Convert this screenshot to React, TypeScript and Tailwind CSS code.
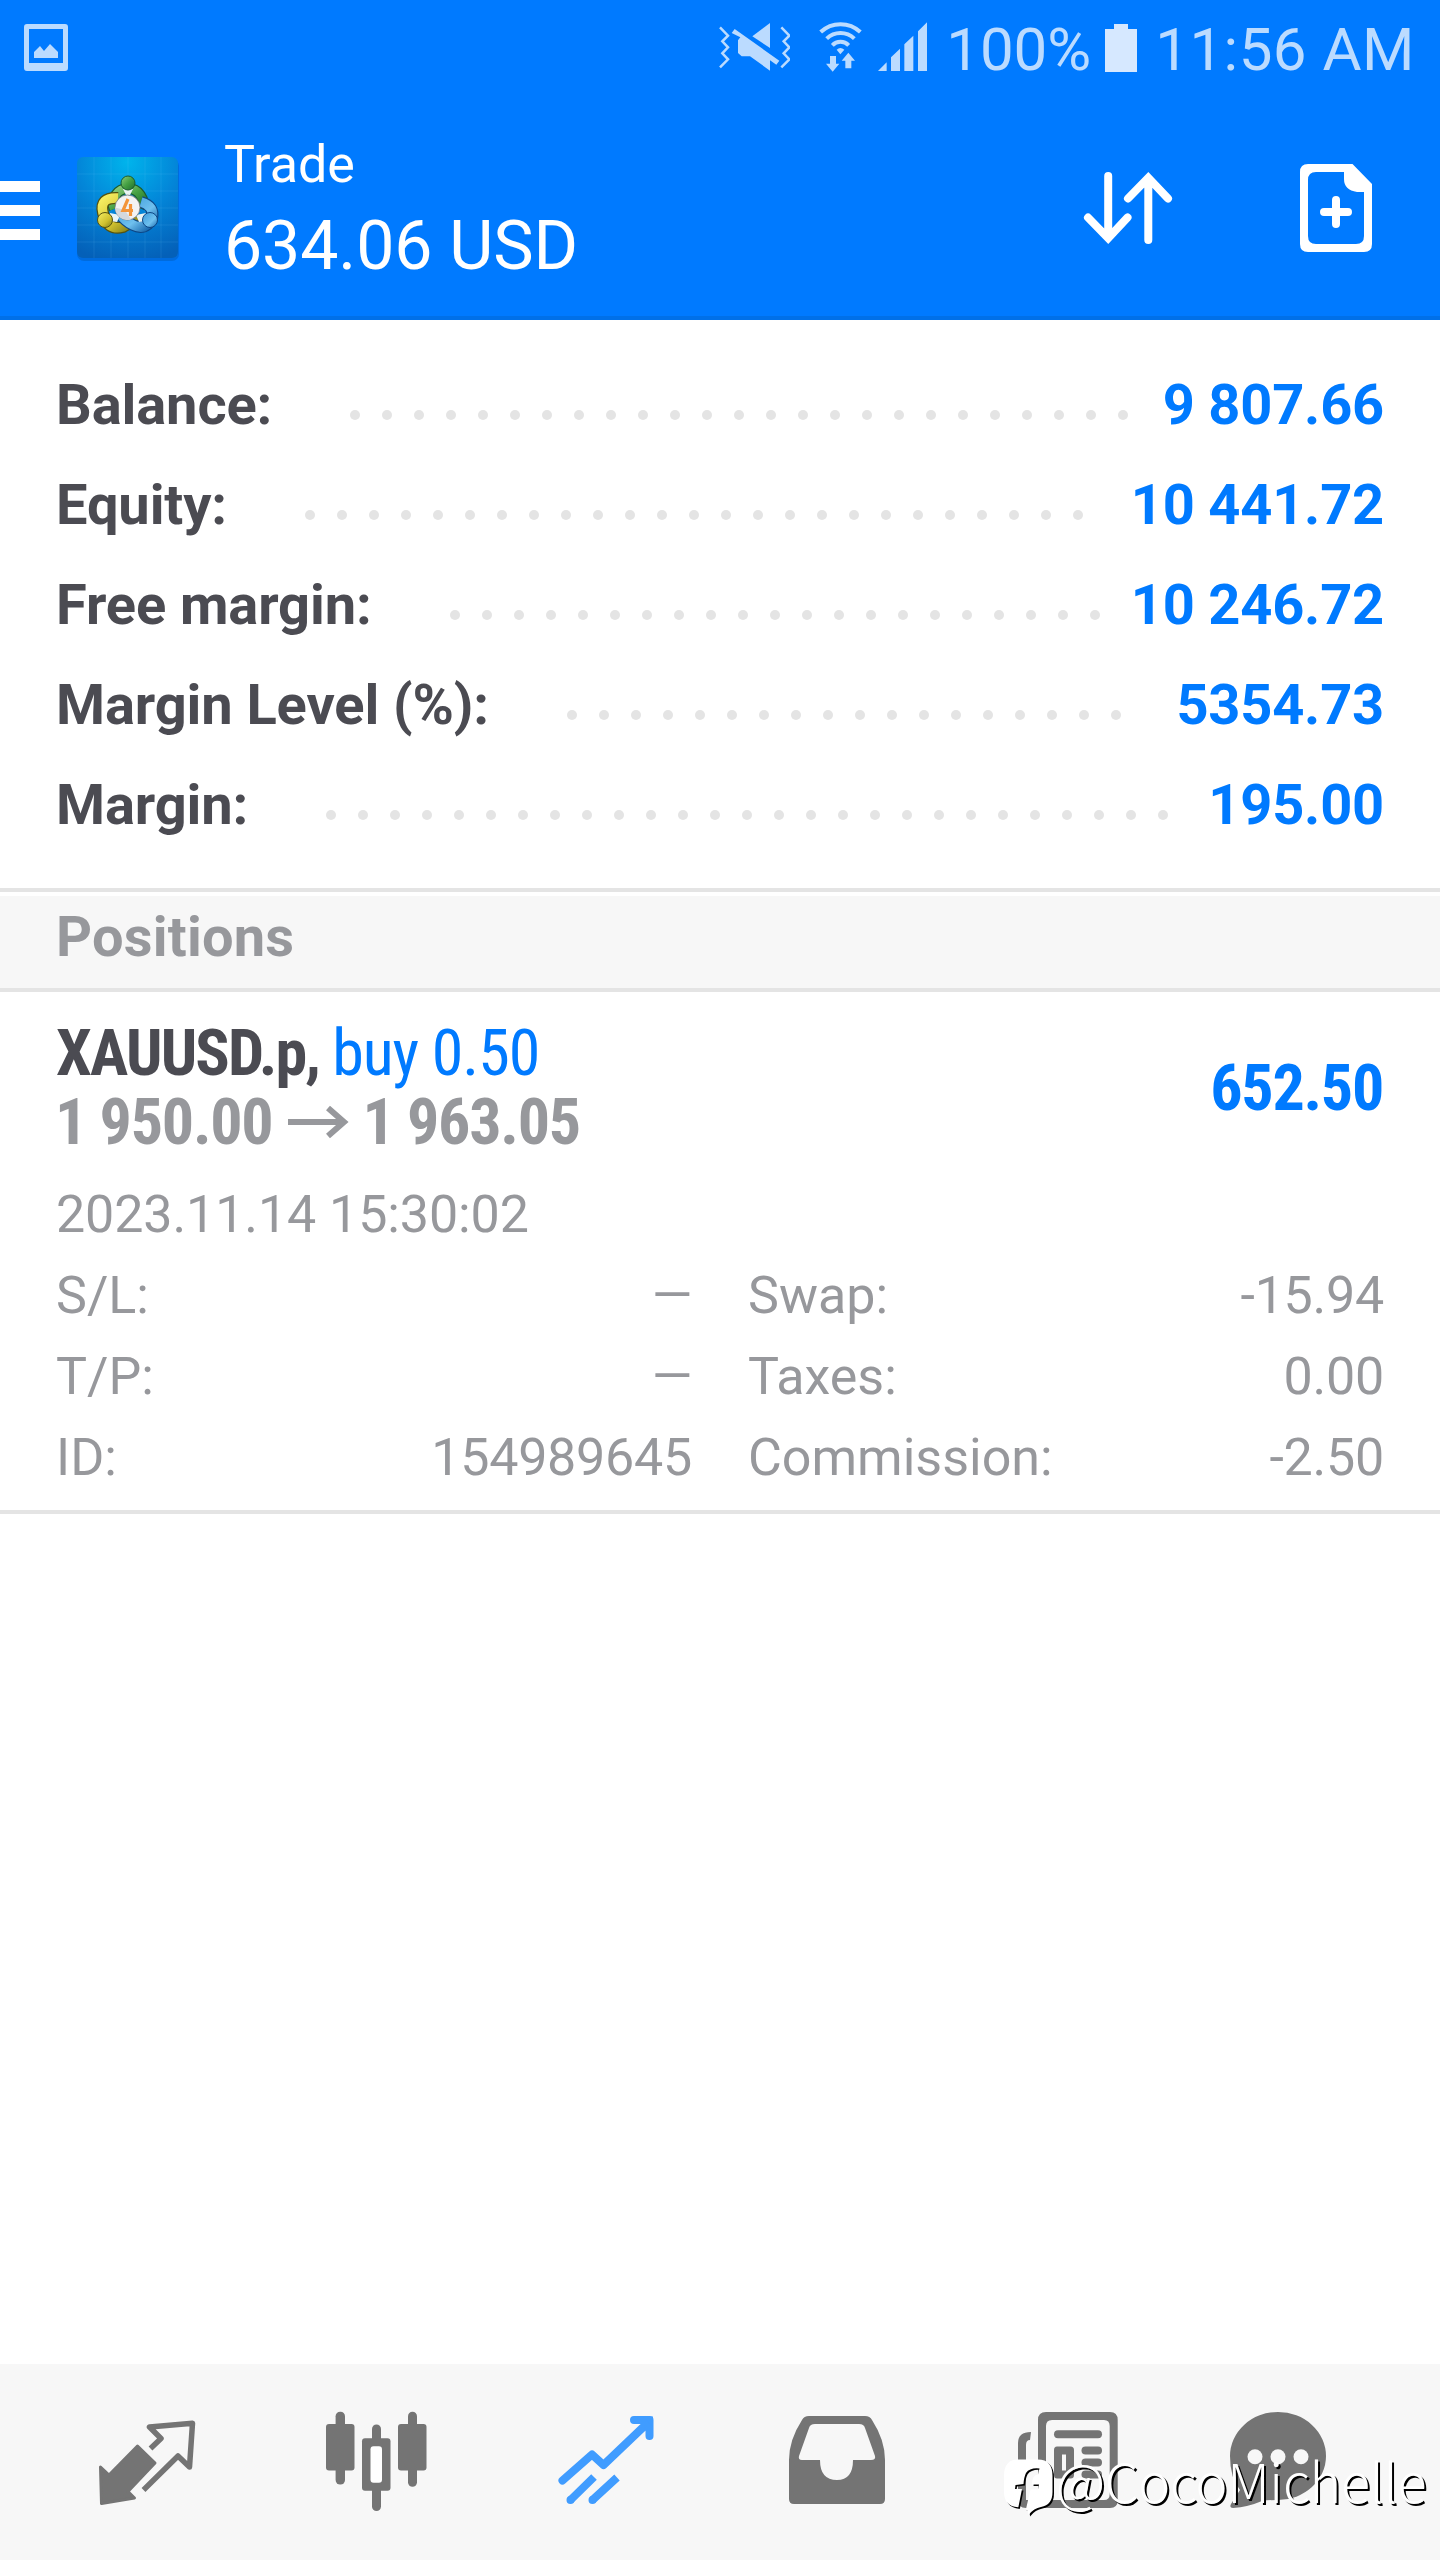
import type { ReactNode } from "react";

const summary = [
  { label: "Balance:", value: "9 807.66", dots: 25 },
  { label: "Equity:", value: "10 441.72", dots: 25 },
  { label: "Free margin:", value: "10 246.72", dots: 21 },
  { label: "Margin Level (%):", value: "5354.73", dots: 18 },
  { label: "Margin:", value: "195.00", dots: 27 },
];

const details = [
  ["S/L:", "—"],
  ["Swap:", "-15.94"],
  ["T/P:", "—"],
  ["Taxes:", "0.00"],
  ["ID:", "154989645"],
  ["Commission:", "-2.50"],
];

function StatusBar() {
  return (
    <div className="flex h-[100px] items-center text-[60px] leading-[100px] text-[#bbdbff]">
      <svg className="-mt-[5px] ml-6 h-12 w-11" viewBox="0 0 44 48">
        <path fillRule="evenodd" fill="#bbdbff" d="M3 0H41Q44 0 44 3V44Q44 47 41 47H3Q0 47 0 44V3Q0 0 3 0ZM5 5V39H39V5Z" />
        <path fill="#bbdbff" d="M10 34V28L16 22L20 27L26 20L34 28V34Z" />
      </svg>
      <svg className="-mt-[5px] ml-auto h-[65px] w-20" viewBox="0 0 240 195">
        <g fill="none" stroke="#bbdbff" strokeWidth="7.500">
          <path d="M30 37L54 62L37 79L54 97L37 115L54 133L30 157" />
          <path d="M214 37L238 62L221 79L238 97L221 115L238 133L214 157" />
        </g>
        <path fill="#bbdbff" d="M180 24V99L127 64Z" />
        <path fill="#bbdbff" d="M74 42L208 137L199 149L180 136V167L120 124H95L84 114V76L91 67L65 54Z" />
      </svg>
      <svg className="-mt-[5px] h-[65px] w-20" viewBox="240 0 240 195">
        <g fill="none" stroke="#bbdbff" strokeWidth="12">
          <path d="M332 51A87 87 0 0 1 451 51" />
          <path d="M350 71A60 60 0 0 1 433 71" />
          <path d="M367 91A34 34 0 0 1 416 91" />
        </g>
        <path fill="#bbdbff" d="M380 104Q391 94 403 104L391 118ZM360 123H378V146H388L368 170L348 146H360ZM415 113L435 137H424V160H406V137H395Z" />
      </svg>
      <svg className="-mt-[5px] h-[65px] w-20" viewBox="480 0 240 195">
        <path fill="#bbdbff" d="M504 168L530 142V168ZM543 168V127L570 101V168ZM583 168V88L610 62V168ZM624 168V49L651 22V168Z" />
      </svg>
      <span className="-ml-[4px] w-[150px] whitespace-nowrap">100%</span>
      <svg className="-mt-[5px] ml-[9px] h-12 w-8" viewBox="0 0 32 48">
        <path fill="#d6e8ff" d="M9 0H23V5H32V48H0V5H9Z" />
      </svg>
      <span className="ml-[18px] mr-[25px] whitespace-nowrap tracking-[0.5px]">11:56 AM</span>
    </div>
  );
}

function AppLogo() {
  return (
    <svg className="h-[110px] w-[110px]" viewBox="0 0 110 110">
      <defs>
        <radialGradient id="tile" cx="0.5" cy="0.05" r="1">
          <stop offset="0" stopColor="#00b4ec" />
          <stop offset="0.5" stopColor="#0385d8" />
          <stop offset="1" stopColor="#0460b8" />
        </radialGradient>
        <linearGradient id="green" x1="0" y1="0" x2="1" y2="1">
          <stop offset="0" stopColor="#8fce7d" />
          <stop offset="0.5" stopColor="#45a043" />
          <stop offset="1" stopColor="#1d6b2c" />
        </linearGradient>
        <linearGradient id="gold" x1="0" y1="0" x2="1" y2="1">
          <stop offset="0" stopColor="#f6ee62" />
          <stop offset="0.6" stopColor="#cfc02e" />
          <stop offset="1" stopColor="#7d7a16" />
        </linearGradient>
        <linearGradient id="azure" x1="0" y1="0" x2="1" y2="1">
          <stop offset="0" stopColor="#3a9bdc" />
          <stop offset="0.6" stopColor="#6fc0ee" />
          <stop offset="1" stopColor="#1767ad" />
        </linearGradient>
      </defs>
      <rect x="4" y="6" width="102" height="102" rx="7" fill="#004f9e" opacity="0.35" />
      <rect x="4" y="4" width="101" height="101" rx="6" fill="url(#tile)" />
      <path d="M21 4V105M38 4V105M55 4V105M72 4V105M88 4V105M4 21H105M4 38H105M4 55H105M4 72H105M4 89H105" stroke="#7fd4ff" strokeOpacity="0.13" />
      <path d="M41 56A15 15 0 1 1 69 56" fill="none" stroke="#1c5c2c" strokeWidth="11" />
      <path d="M41 56A15 15 0 1 1 69 56" fill="none" stroke="url(#green)" strokeWidth="8.500" />
      <path d="M45 45Q26 44 30 60Q34 78 50 74Q58 70 62 63" fill="none" stroke="#55520f" strokeWidth="12" />
      <path d="M45 45Q26 44 30 60Q34 78 50 74Q58 70 62 63" fill="none" stroke="url(#gold)" strokeWidth="9.500" />
      <path d="M68 49Q82 53 79 66Q72 78 60 72Q52 68 48 62" fill="none" stroke="#0d4685" strokeWidth="12" />
      <path d="M68 49Q82 53 79 66Q72 78 60 72Q52 68 48 62" fill="none" stroke="url(#azure)" strokeWidth="9.500" />
      <path d="M50 36H60L57 42H53ZM37 60L47 62L44 69L36 68ZM73 60L63 62L66 69L74 68Z" fill="#eaf4f4" />
      <circle cx="55" cy="30" r="7" fill="url(#green)" stroke="#1c5c2c" strokeWidth="1" />
      <circle cx="32" cy="67" r="7.500" fill="url(#gold)" stroke="#55520f" strokeWidth="1" />
      <circle cx="77" cy="67" r="7.500" fill="url(#azure)" stroke="#0d4685" strokeWidth="1" />
      <circle cx="54.500" cy="54.500" r="12.500" fill="#f3f3f3" stroke="#777" strokeWidth="0.8" />
      <path d="M42 54.500A12.500 12.500 0 0 0 58 66.500L52 57Z" fill="#d4d8dc" />
      <path d="M55 46L50 57.500H60M57.500 51V63" fill="none" stroke="#f3953a" strokeWidth="3.200" />
    </svg>
  );
}

function Header() {
  return (
    <header className="h-80 border-b-4 border-[#0070e8] bg-[#007aff] text-white">
      <StatusBar />
      <div className="flex pt-7">
        <div className="mt-[53px] flex w-10 flex-col gap-[13px]">
          <div className="h-[11px] bg-white" />
          <div className="h-[11px] bg-white" />
          <div className="h-[11px] bg-white" />
        </div>
        <div className="ml-[33px] mt-[25px]">
          <AppLogo />
        </div>
        <div className="ml-[41px] mt-px whitespace-nowrap">
          <div className="text-[52px] leading-[72px]">Trade</div>
          <div className="text-[68px] leading-[91px] tracking-[-0.1px]">634.06 USD</div>
        </div>
        <svg className="ml-auto mt-[36px] h-[88px] w-[92px]" viewBox="1082 164 92 88">
          <path d="M1108.200 176V237M1088 217.500L1108.200 238.300L1127.500 217.500M1148.300 240V179M1128 198.500L1148.300 177.700L1168 198.500" fill="none" stroke="white" strokeWidth="8" strokeLinecap="round" />
        </svg>
        <svg className="ml-[126px] mr-[68px] mt-[36px] h-[88px] w-[72px]" viewBox="1300 164 72 88">
          <path fillRule="evenodd" fill="white" d="M1308 164H1352.500L1372 184V244Q1372 252 1364 252H1308Q1300 252 1300 244V172Q1300 164 1308 164ZM1316 172Q1308 172 1308 180V236Q1308 244 1316 244H1356Q1364 244 1364 236V192H1357Q1344 190 1344 179V172Z" />
          <path d="M1324 212H1348M1336 200V224" stroke="white" strokeWidth="8" strokeLinecap="round" />
        </svg>
      </div>
    </header>
  );
}

function NavIcon({ x, children }: { x: number; children: ReactNode }) {
  return (
    <svg className="h-[196px] w-[230px]" viewBox={`${x} 2364 230 196`} fill="#747474">
      {children}
    </svg>
  );
}

function BottomNav() {
  return (
    <nav className="flex h-[196px] bg-[#f7f7f7] pl-8">
      <NavIcon x={32}>
        <path stroke="#747474" strokeWidth="3" strokeLinejoin="round" d="M137.500 2446L155 2463L128 2491.500L134.500 2498L101.500 2503.500L100.500 2467L109 2475Z" />
        <path fill="none" stroke="#747474" strokeWidth="5.500" strokeLinejoin="round" d="M150.500 2448.500L161 2438.500L149.500 2427L192.500 2423.300L189.500 2467L178 2456L143.500 2490" />
      </NavIcon>
      <NavIcon x={262}>
        <rect x="335.600" y="2411.700" width="9.400" height="72.800" rx="4.500" />
        <rect x="326" y="2424" width="28.500" height="46.500" rx="3" />
        <rect x="408" y="2411.700" width="9" height="75" rx="4.500" />
        <rect x="398" y="2424" width="28.500" height="46.500" rx="3" />
        <rect x="372" y="2424.500" width="9" height="86.500" rx="4.500" />
        <rect x="362" y="2438.300" width="28.500" height="52.500" rx="3" />
        <rect x="370.500" y="2446.300" width="11.500" height="36.500" rx="3" fill="#fff" />
      </NavIcon>
      <NavIcon x={492}>
        <g fill="none" stroke="#409cff" strokeWidth="8">
          <path strokeLinecap="round" strokeLinejoin="round" d="M562.500 2480.500L592 2454.500L603.500 2465L646 2424.500M634 2420H649.500V2436" />
          <path d="M643 2416.500H653V2427Z" fill="#409cff" stroke="none" />
          <path d="M570.500 2500L594 2477M592.500 2500L617 2477.500" />
          <path strokeLinecap="round" d="M570.500 2500h0M592.500 2500h0" />
        </g>
      </NavIcon>
      <NavIcon x={722}>
        <path fillRule="evenodd" d="M809 2416H865Q870 2416 872 2420Q885 2440 885 2460V2499Q885 2504 880 2504H794Q789 2504 789 2499V2460Q789 2440 802 2420Q804 2416 809 2416ZM815 2424Q810 2424 809 2428L799 2456Q798 2460 802 2460H820Q820 2480 837 2480Q853 2480 853 2460H871Q876 2460 875 2456L865 2428Q864 2424 859 2424Z" />
      </NavIcon>
      <NavIcon x={952}>
        <path fillRule="evenodd" d="M1046 2412H1110Q1117.700 2412 1117.700 2420V2500Q1117.700 2508 1110 2508H1026Q1018 2508 1018 2500V2443Q1018 2432 1031 2432L1030 2440Q1026 2440 1026 2445V2500H1038V2420Q1038 2412 1046 2412ZM1052 2420Q1046 2420 1046 2426V2500H1104Q1109.700 2500 1109.700 2494V2426Q1109.700 2420 1104 2420Z" />
        <rect x="1054" y="2430.300" width="48" height="8" rx="4" />
        <path fillRule="evenodd" d="M1057 2446.500H1070.500Q1074 2446.500 1074 2450V2475Q1074 2478.500 1070.500 2478.500H1057Q1054 2478.500 1054 2475V2450Q1054 2446.500 1057 2446.500ZM1062 2454.500V2470.500H1066V2454.500Z" />
        <rect x="1081.500" y="2446.500" width="20.500" height="8" rx="4" />
        <rect x="1081.500" y="2458.500" width="20.500" height="8" rx="4" />
        <rect x="1081.500" y="2470.500" width="20.500" height="8" rx="4" />
      </NavIcon>
      <NavIcon x={1182}>
        <path d="M1230 2456A48 44 0 1 1 1278 2500Q1268 2500 1262 2501Q1248 2507 1233 2508Q1229 2508 1231 2504L1240 2490Q1230 2478 1230 2456Z" />
        <circle cx="1255" cy="2456.700" r="7.500" fill="#f7f7f7" />
        <circle cx="1278" cy="2456.700" r="7.500" fill="#f7f7f7" />
        <circle cx="1301" cy="2456.700" r="7.500" fill="#f7f7f7" />
      </NavIcon>
    </nav>
  );
}

function Watermark() {
  return (
    <div className="absolute bottom-[40px] left-[1000px] flex h-[64px] items-start">
      <svg className="h-[64px] w-[57px]" viewBox="1000 2456 57 64">
        <defs>
          <mask id="cut" maskUnits="userSpaceOnUse" x="1000" y="2456" width="60" height="66">
            <path
              d="M1018 2459.500H1038Q1052.500 2459.500 1052.500 2476V2492Q1052.500 2505 1041 2507Q1034 2508 1028.500 2515Q1029 2508 1020 2507.500Q1004 2507 1004 2492V2476Q1004 2459.500 1018 2459.500Z"
              fill="white"
            />
            <path
              d="M1039.500 2468.500Q1030 2467.500 1026 2473Q1024 2477 1023.500 2484L1015.500 2485L1015 2489H1022L1018 2509H1026L1030.500 2489.500H1038L1039 2484.500H1032Q1032 2475 1038 2474.500Z"
              fill="black"
            />
          </mask>
        </defs>
        <g transform="translate(1.500 1.500)">
          <rect x="1000" y="2456" width="60" height="66" fill="black" mask="url(#cut)" />
        </g>
        <rect x="1000" y="2456" width="60" height="66" fill="white" mask="url(#cut)" />
      </svg>
      <span className="-ml-px -mt-[8px] whitespace-nowrap font-['Noto_Sans_CJK_SC',sans-serif] text-[54px] font-light leading-[64px] tracking-[-0.35px] text-white [text-shadow:2px_2px_0_#000]">
        @CocoMichelle
      </span>
    </div>
  );
}

export default function App() {
  return (
    <div className="relative flex h-[2560px] w-[1440px] flex-col overflow-hidden bg-white font-['Roboto',sans-serif]">
      <Header />

      <section className="h-[572px] border-b-4 border-[#e4e4e4] px-14 pt-[35px] text-[56px] font-bold leading-[100px] tracking-[-0.2px] whitespace-nowrap">
        {summary.map((row) => (
          <div key={row.label} className="flex h-[100px] items-center">
            <span className="tracking-[-0.1px] text-[#4b4b52]">{row.label}</span>
            <span className="ml-[78px] mt-[20px] flex gap-[22px]">
              {Array.from({ length: row.dots }, (_, i) => (
                <span key={i} className="size-[10px] rounded-full bg-[#e4e4e4]" />
              ))}
            </span>
            <span className="ml-auto text-[#007aff]">{row.value}</span>
          </div>
        ))}
      </section>

      <div className="mt-1 h-24 border-b-4 border-[#e4e4e4] bg-[#f7f7f7] px-14 text-[56px] font-bold leading-[82px] tracking-[0.2px] text-[#97989c]">
        Positions
      </div>

      <section className="h-[522px] border-b-4 border-[#e4e4e4] px-14 pt-[27px] whitespace-nowrap text-[#97989c]">
        <div className="flex items-center justify-between font-['Roboto_Condensed',sans-serif] text-[64px] font-bold leading-[69px] tracking-[-1.25px]">
          <div>
            <div className="text-[#4b4b52]">
              <span className="tracking-[-1.8px]">XAUUSD.p, </span>
              <span className="font-normal tracking-[-1.05px] text-[#007aff]">buy 0.50</span>
            </div>
            <div className="flex items-center">
              <span className="-ml-px">1 950.00</span>
              <svg className="ml-[16px] mr-[12px] h-9 w-[62px]" viewBox="0 0 62 36">
                <path d="M0 17H57M40 3L56 17L40 31" fill="none" stroke="#97989c" strokeWidth="6" />
              </svg>
              <span>1 963.05</span>
            </div>
          </div>
          <div className="mr-px text-[#007aff]">652.50</div>
        </div>
        <div className="mt-[17px] text-[52px] leading-[81px] tracking-[-0.1px]">2023.11.14 15:30:02</div>
        <div className="grid grid-cols-2 gap-x-14 text-[52px] leading-[81px]">
          {details.map(([label, value]) => (
            <div key={label} className="flex justify-between">
              <span>{label}</span>
              <span className="tracking-[-0.25px]">{value}</span>
            </div>
          ))}
        </div>
      </section>

      <div className="flex-1" />
      <BottomNav />
      <Watermark />
    </div>
  );
}
